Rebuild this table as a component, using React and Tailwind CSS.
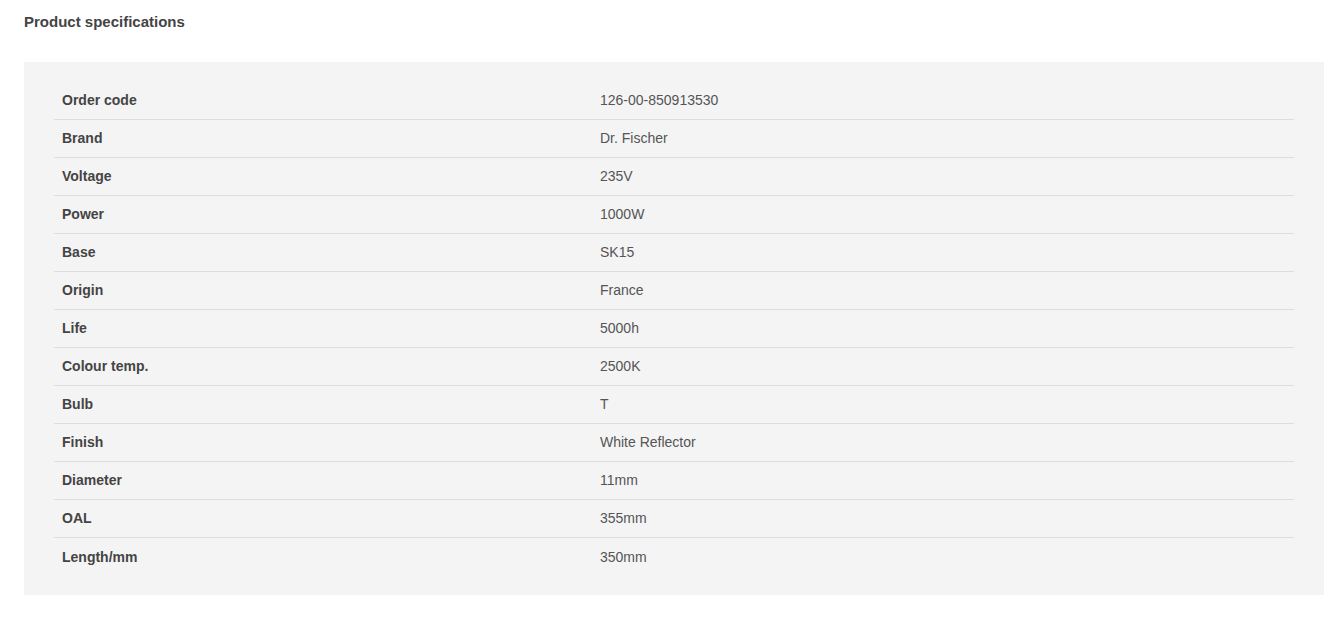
import React from "react";

const specs = [
  ["Order code", "126-00-850913530"],
  ["Brand", "Dr. Fischer"],
  ["Voltage", "235V"],
  ["Power", "1000W"],
  ["Base", "SK15"],
  ["Origin", "France"],
  ["Life", "5000h"],
  ["Colour temp.", "2500K"],
  ["Bulb", "T"],
  ["Finish", "White Reflector"],
  ["Diameter", "11mm"],
  ["OAL", "355mm"],
  ["Length/mm", "350mm"],
];

export default function App() {
  return (
    <div className="bg-white px-6 pt-[12px] font-['Liberation_Sans',Arial,sans-serif] text-[14px]">
      <h2 className="font-bold text-[15px] text-[#444] leading-[20px]">Product specifications</h2>

      <div className="mt-[30px] w-[1300px] bg-[#f4f4f4] px-[30px] pt-[20px] pb-[19px]">
        <div>
          {specs.map(([label, value], i) => (
            <div
              key={label}
              className={`flex h-[38px] items-center ${i < specs.length - 1 ? "border-b border-[#dddddd]" : ""}`}
            >
              <div className="w-[538px] pl-2 font-bold text-[#444]">{label}</div>
              <div className="pl-2 text-[#555]">{value}</div>
            </div>
          ))}
        </div>
      </div>
    </div>
  );
}
